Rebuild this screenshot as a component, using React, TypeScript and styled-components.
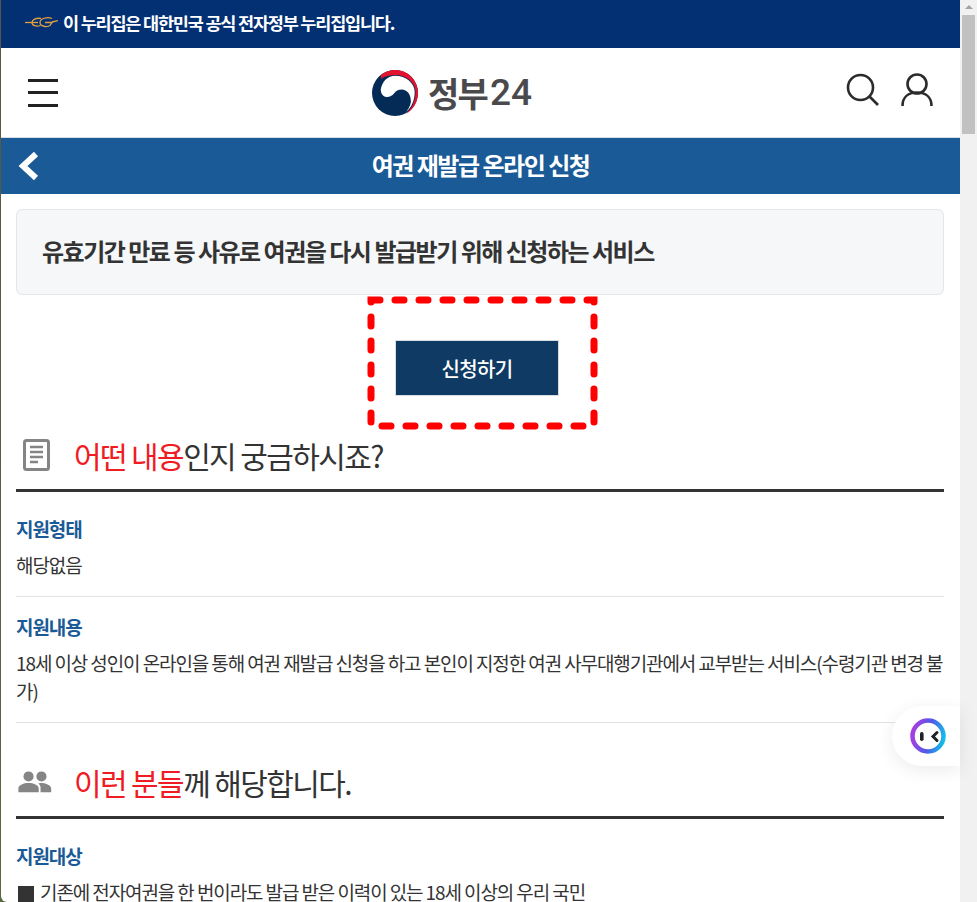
import React from "react";
import styled, { createGlobalStyle } from "styled-components";

const Global = createGlobalStyle`
  html, body { margin: 0; padding: 0; height: 100%; overflow: hidden; background: #4a4a3a; }
  body { font-family: "Noto Sans CJK KR", "Noto Sans", sans-serif; color: #333; }
  * { box-sizing: border-box; }
`;

const Frame = styled.div`
  position: relative;
  width: 977px;
  height: 902px;
  padding-left: 1px;
  display: flex;
  overflow: hidden;
  background: linear-gradient(#5b5546, #58683f);
`;
const Page = styled.div`
  width: 959px;
  height: 902px;
  background: #fff;
  overflow: hidden;
  border-bottom-left-radius: 6px;
`;
const Scrollbar = styled.div`
  width: 17px;
  height: 902px;
  background: #f1f1f1;
  display: flex;
  flex-direction: column;
  align-items: center;
  padding-top: 5px;
`;
const ScrollArrow = styled.div`
  width: 0;
  height: 0;
  border-left: 4px solid transparent;
  border-right: 4px solid transparent;
  border-bottom: 4px solid #a3a3a3;
`;
const ScrollThumb = styled.div`
  width: 13px;
  height: 119px;
  margin-top: 6px;
  background: #c1c1c1;
`;
const Banner = styled.div`
  height: 48px;
  background: #032f73;
  display: flex;
  align-items: center;
  gap: 5px;
  padding: 0 0 3px 24px;
  color: #fff;
  font-size: 17.5px;
  font-weight: 700;
  letter-spacing: -1.2px;
`;
const Header = styled.header`
  height: 90px;
  display: flex;
  align-items: center;
  justify-content: space-between;
  border-bottom: 1px solid #d8dde3;
  padding: 0 27px;
  position: relative;
`;
const Menu = styled.div`
  width: 30px;
  height: 28px;
  display: flex;
  flex-direction: column;
  justify-content: space-between;
  margin-top: 0;
  & > i { display: block; height: 3px; background: #222; }
`;
const Logo = styled.div`
  position: absolute;
  left: 371px;
  top: 22px;
  display: flex;
  align-items: center;
  gap: 10px;
`;
const LogoWord = styled.span`
  font-size: 34px;
  line-height: 46px;
  font-weight: 700;
  color: #4a4a4c;
  letter-spacing: -1.8px;
  display: flex;
  align-items: center;
`;
const LogoNum = styled.span`
  font-family: Roboto, sans-serif;
  font-size: 37px;
  letter-spacing: 0;
  font-weight: 500;
  margin-left: 3px;
`;
const HeaderIcons = styled.div`
  display: flex;
  gap: 22px;
  margin-top: -6px;
`;
const TitleBar = styled.div`
  height: 56px;
  background: #1a5a96;
  display: flex;
  align-items: center;
  justify-content: center;
  position: relative;
  padding-bottom: 4px;
  color: #fff;
  font-size: 24px;
  font-weight: 700;
  letter-spacing: -1.5px;
`;
const Back = styled.svg`
  position: absolute;
  left: 16px;
  top: 12px;
`;
const Content = styled.main`
  padding: 15px 16px 0 15px;
`;
const Summary = styled.div`
  height: 86px;
  background: #f6f7f9;
  border: 1px solid #e3e6ea;
  border-radius: 6px;
  display: flex;
  align-items: center;
  padding: 0 25px 4px;
  font-size: 24px;
  font-weight: 700;
  letter-spacing: -1.5px;
  color: #333;
`;
const ButtonRow = styled.div`
  display: flex;
  justify-content: center;
  padding: 45px 6px 0 0;
`;
const Apply = styled.div`
  width: 164px;
  height: 56px;
  background: #0e3a63;
  border: 1px solid #d9dde2;
  color: #fff;
  font-size: 20px;
  font-weight: 500;
  display: flex;
  align-items: center;
  justify-content: center;
  letter-spacing: -0.6px;
`;
const SectionHead = styled.div`
  margin: 40px 0 7px;
  display: flex;
  align-items: center;
  border-bottom: 3px solid #333;
  padding-bottom: 15px;
`;
const IconSlot = styled.div<{ $pad: number }>`
  width: 58px;
  padding-left: ${(p) => p.$pad}px;
  display: flex;
  align-items: center;
`;
const HeadText = styled.h2`
  margin: 0;
  font-size: 30px;
  line-height: 38px;
  font-weight: 400;
  letter-spacing: -1.6px;
  color: #333;
`;
const Red = styled.span`
  color: #f01c24;
`;
const Item = styled.div<{ $last?: boolean }>`
  padding: 16px 0 17px;
  border-bottom: ${(p) => (p.$last ? "none" : "1px solid #e2e2e2")};
`;
const Label = styled.h3`
  margin: 0 0 8px;
  font-size: 19px;
  line-height: 28px;
  font-weight: 700;
  color: #1a5a96;
  letter-spacing: -1.1px;
`;
const Body = styled.p`
  margin: 0;
  font-size: 19px;
  line-height: 28px;
  color: #333;
  letter-spacing: -1.1px;
`;
const Square = styled.span`
  display: inline-block;
  width: 16px;
  height: 16px;
  background: #333;
  margin: 0 6px 0 2px;
  vertical-align: -2px;
`;
const Dashes = styled.svg`
  position: absolute;
  left: 360px;
  top: 290px;
  pointer-events: none;
`;
const Floating = styled.div`
  position: absolute;
  left: 892px;
  top: 706px;
  width: 68px;
  height: 60px;
  background: #fff;
  border-radius: 30px 0 0 30px;
  box-shadow: 0 4px 18px rgba(0, 0, 0, 0.08);
  display: flex;
  align-items: center;
  padding-left: 18px;
`;

export default function App() {
  return (
    <Frame>
      <Global />
      <Page>
        <Banner>
          <svg width="33" height="11" viewBox="0 0 33 11" fill="none" stroke="#e0a040" strokeWidth="1.3">
            <path d="M0 5.500H13" />
            <path d="M16 1.500C11 .5 7 3 7 5.500 7 8.500 11 10 15.500 8.500" />
            <path d="M27 1.500C22-.5 15 1.500 15 5.500 15 9.500 22 10.500 25 8.500L27 5.500H20" />
            <path d="M27 5L33 3.700" />
          </svg>
          <span>이 누리집은 대한민국 공식 전자정부 누리집입니다.</span>
        </Banner>
        <Header>
          <Menu><i /><i /><i /></Menu>
          <Logo>
            <svg width="46" height="46" viewBox="0 0 46 46">
              <circle cx="23" cy="23" r="23" fill="#032b55" />
              <path d="M9 5C13 1.500 18 0 23 0 36 0 46 10 46 23 46 32 41 40 34 44 40 38 43.500 31 43.500 22 43.500 12 34 5 23 5 18 5 13 6 9 9Z" fill="#e3122f" />
              <path d="M8.700 20C10 11 16 5.700 23 5.700 34 5.700 42.700 13 42.700 22 42.700 31 39 38 34.300 41.700 38 37 39.500 33 38.700 29 38 23 34 19.500 30 19.500 26 19.500 24 21 22 23.500 20 26 17 27.500 14 27 11 26.500 9 24 8.700 20Z" fill="#fff" />
            </svg>
            <LogoWord>정부<LogoNum>24</LogoNum></LogoWord>
          </Logo>
          <HeaderIcons>
            <svg width="33" height="33" viewBox="0 0 33 33" fill="none" stroke="#2b2b2b" strokeWidth="2.600">
              <circle cx="14.500" cy="14.500" r="12.500" />
              <path d="M23.500 23.500L32 32" />
            </svg>
            <svg width="32" height="33" viewBox="0 0 32 33" fill="none" stroke="#2b2b2b" strokeWidth="2.600">
              <circle cx="16" cy="11" r="9.500" />
              <path d="M1.500 33C1.500 24 7.500 19.500 16 19.500S30.500 24 30.500 33" />
            </svg>
          </HeaderIcons>
        </Header>
        <TitleBar>
          <Back width="24" height="32" viewBox="0 0 24 32" fill="none" stroke="#fff" strokeWidth="6">
            <path d="M19 4L6 16l13 12" />
          </Back>
          여권 재발급 온라인 신청
        </TitleBar>
        <Content>
          <Summary>유효기간 만료 등 사유로 여권을 다시 발급받기 위해 신청하는 서비스</Summary>
          <ButtonRow>
            <Apply>신청하기</Apply>
          </ButtonRow>
          <SectionHead>
            <IconSlot $pad={5}>
              <svg width="30" height="34" viewBox="0 0 30 34" fill="none">
                <rect x="3.500" y="2.500" width="24" height="29" rx="2" stroke="#858585" strokeWidth="3" />
                <path d="M9 9h13M9 14h13M9 19h13M9 24h8" stroke="#858585" strokeWidth="2.400" />
              </svg>
            </IconSlot>
            <HeadText><Red>어떤 내용</Red>인지 궁금하시죠?</HeadText>
          </SectionHead>
          <Item>
            <Label>지원형태</Label>
            <Body>해당없음</Body>
          </Item>
          <Item>
            <Label>지원내용</Label>
            <Body>18세 이상 성인이 온라인을 통해 여권 재발급 신청을 하고 본인이 지정한 여권 사무대행기관에서 교부받는 서비스(수령기관 변경 불가)</Body>
          </Item>
          <SectionHead>
            <IconSlot $pad={2}>
              <svg width="34" height="24" viewBox="0 0 36 26" fill="#858585">
                <circle cx="11" cy="7" r="5.500" />
                <circle cx="25" cy="7" r="5.500" />
                <path d="M0 24v-4c0-4 6-6 11-6s11 2 11 6v4z" />
                <path d="M24 14c5 0 11.500 2 11.500 6v4H24v-5c0-2-1-3.500-2.500-4.500.8-.3 1.600-.5 2.500-.5z" />
              </svg>
            </IconSlot>
            <HeadText><Red>이런 분들</Red>께 해당합니다.</HeadText>
          </SectionHead>
          <Item $last>
            <Label>지원대상</Label>
            <Body><Square />기존에 전자여권을 한 번이라도 발급 받은 이력이 있는 18세 이상의 우리 국민</Body>
          </Item>
        </Content>
      </Page>
      <Scrollbar>
        <ScrollArrow />
        <ScrollThumb />
      </Scrollbar>
      <Dashes width="245" height="145" viewBox="360 290 245 145" fill="none">
        <path d="M371 300H594V426H371Z" stroke="#fe0000" strokeWidth="7" strokeLinecap="round" strokeDasharray="9 15" />
      </Dashes>
      <Floating>
        <svg width="36" height="36" viewBox="0 0 36 36" fill="none">
          <defs>
            <linearGradient id="ring" x1="0" y1="0.6" x2="1" y2="0.8">
              <stop offset="0" stopColor="#a23fe0" />
              <stop offset="0.5" stopColor="#4f5ae8" />
              <stop offset="1" stopColor="#12c0e8" />
            </linearGradient>
          </defs>
          <circle cx="18" cy="18" r="15.500" stroke="url(#ring)" strokeWidth="4.500" />
          <rect x="10" y="14" width="3.600" height="9" rx="1.800" fill="#222" />
          <path d="M27 14.500l-4 4 4 4" stroke="#222" strokeWidth="3" strokeLinecap="round" />
        </svg>
      </Floating>
    </Frame>
  );
}
